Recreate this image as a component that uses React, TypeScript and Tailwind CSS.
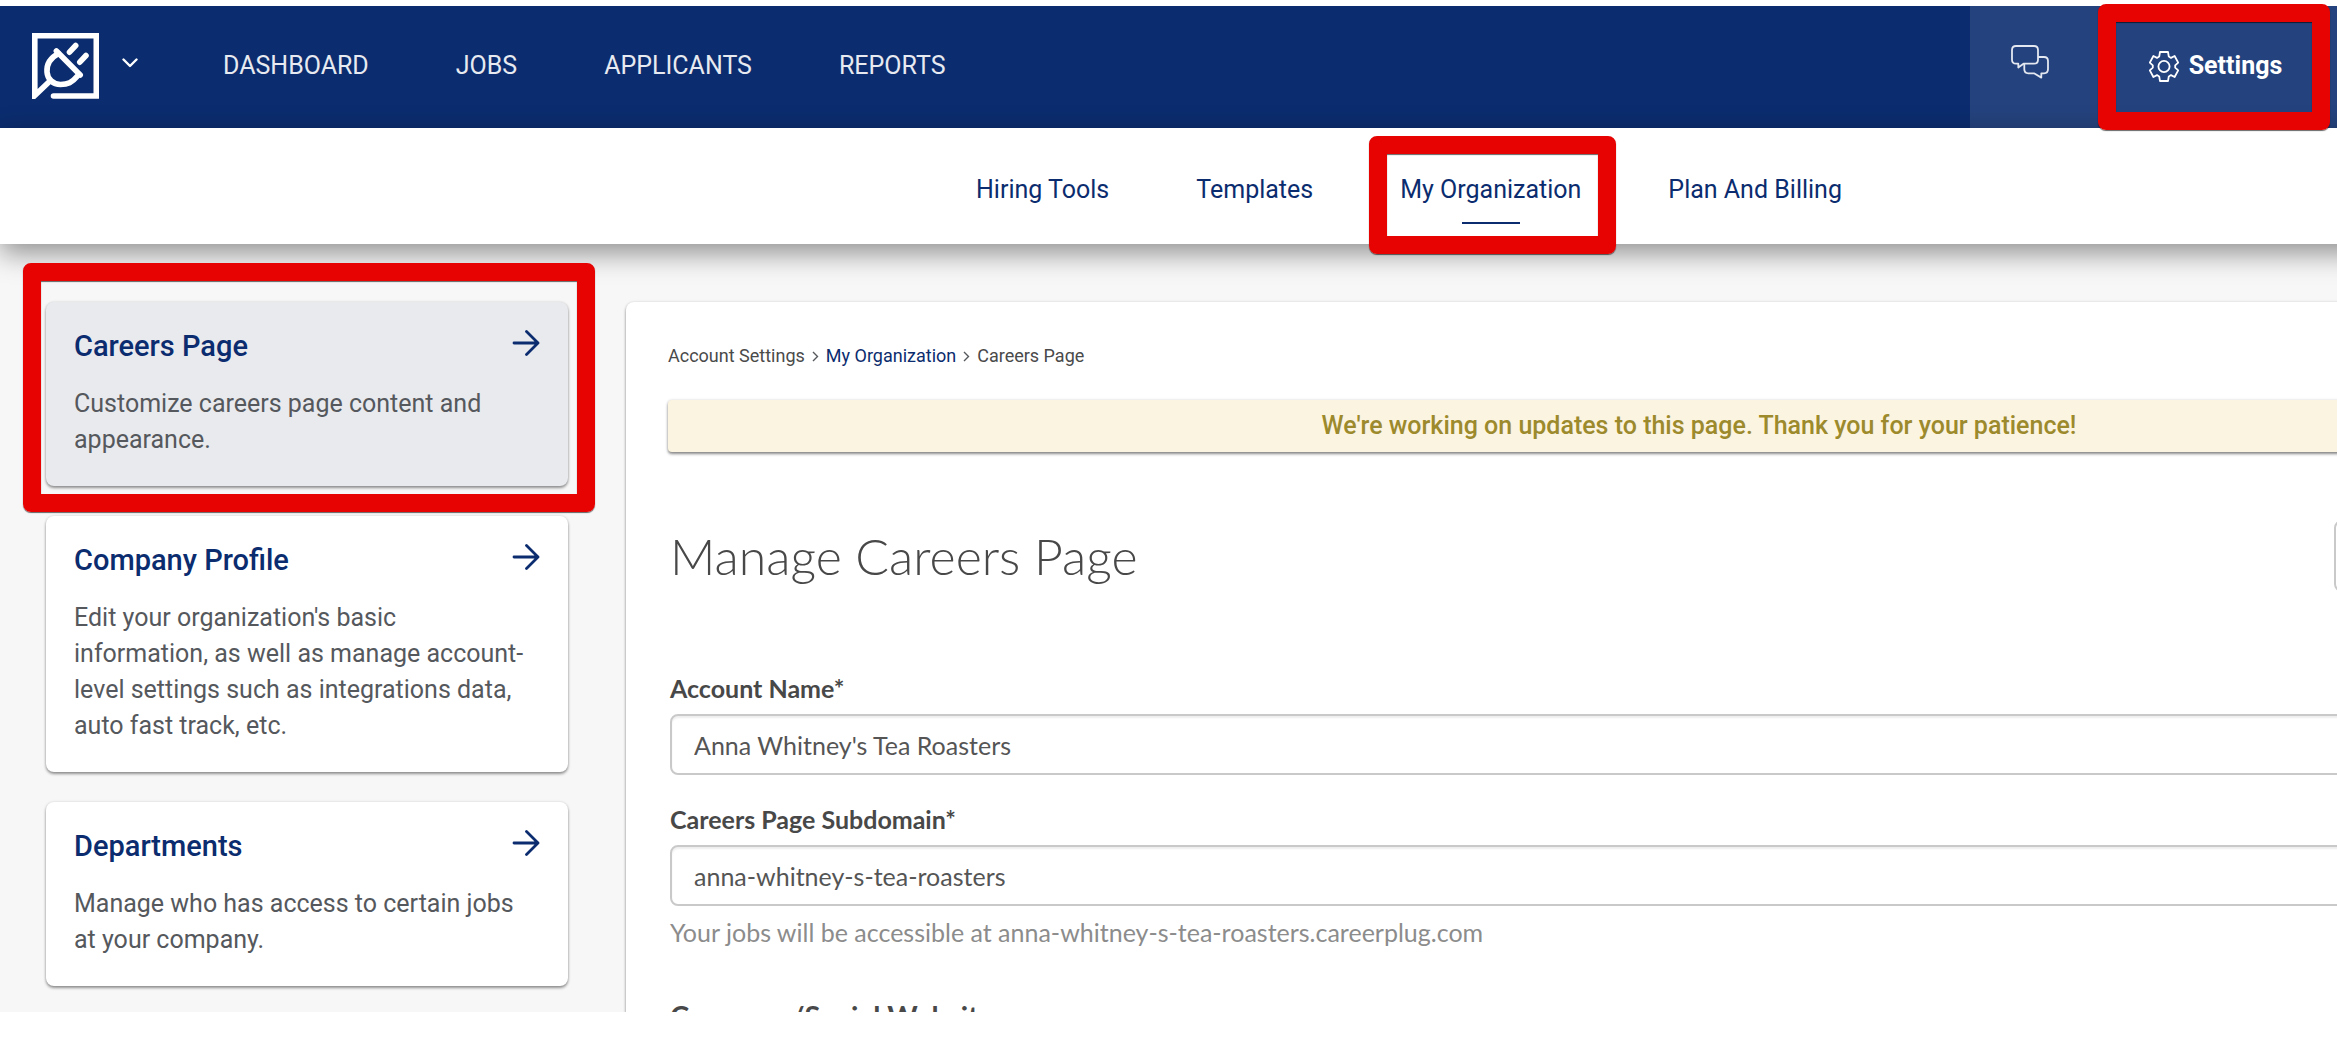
import { clsx } from "clsx";

interface SettingsCard {
  title: string;
  description: string;
  active?: boolean;
}

const mainLinks = ["DASHBOARD", "JOBS", "APPLICANTS", "REPORTS"];

const subLinks = ["Hiring Tools", "Templates", "My Organization", "Plan And Billing"];

const cards: SettingsCard[] = [
  {
    title: "Careers Page",
    description: "Customize careers page content and appearance.",
    active: true,
  },
  {
    title: "Company Profile",
    description:
      "Edit your organization's basic information, as well as manage account-level settings such as integrations data, auto fast track, etc.",
  },
  {
    title: "Departments",
    description: "Manage who has access to certain jobs at your company.",
  },
];

function Highlight({ className }: { className: string }) {
  return (
    <span
      aria-hidden="true"
      className={clsx(
        "pointer-events-none absolute z-20 rounded-lg border-[18px] border-[#e60302]",
        "shadow-[0_1px_1px_rgba(0,0,0,0.6),inset_0_1px_1px_rgba(0,0,0,0.6)]",
        className
      )}
    />
  );
}

function Logo() {
  return (
    <svg width="67" height="66" viewBox="0 0 67 66" fill="none" stroke="white" strokeWidth="5.6" strokeLinecap="round">
      <path d="M21.5 63H64.3V2.8H2.8V62.5L18 48" />
      <path d="M24.4 18L48.2 42" />
      <path d="M26.5 20.5C18 25 14.5 32 15 39C15.5 46 21 51.5 28.5 51.5C36 51.5 40 49.5 45 43.5" />
      <path d="M43.7 12.5L37.5 19.2M54 22.5L47.8 29.2" />
    </svg>
  );
}

function ChatIcon() {
  return (
    <svg width="38" height="34" viewBox="0 0 38 34" fill="none" stroke="#e4e8f0" strokeWidth="1.8" strokeLinejoin="round">
      <path d="M5 1H23Q27 1 27 5V14.7Q27 18.7 23 18.7H12.5L7.3 22.5V18.7H5Q1 18.7 1 14.7V5Q1 1 5 1Z" />
      <path d="M27 12H33Q37 12 37 16V24.3Q37 28.3 33 28.3H30.3V32.6L23 28.3H17.3Q13.3 28.3 13.3 24.3V18.7" />
    </svg>
  );
}

function GearIcon() {
  return (
    <svg width="30" height="31" viewBox="0 0 30 31" fill="none" stroke="white" strokeWidth="1.8" strokeLinejoin="round">
      <path d="M11 1H19L19.8 5.6L22 6.9L25.6 5L29.2 11.6L26.2 14.3V16.7L29.2 19.4L25.6 26L22 24.1L19.8 25.4L19 30H11L10.2 25.4L8 24.1L4.4 26L0.8 19.4L3.8 16.7V14.3L0.8 11.6L4.4 5L8 6.9L10.2 5.6Z" />
      <circle cx="15" cy="15.5" r="5.6" />
    </svg>
  );
}

function Header() {
  return (
    <header className="flex h-[122px] shrink-0 bg-[#0b2c6e]">
      <div className="flex flex-1 items-center pb-0.5 pl-8">
        <button aria-label="Switch account" className="flex items-center gap-[23px]">
          <Logo />
          <svg width="16" height="10" viewBox="0 0 16 10" fill="none" stroke="white" strokeWidth="2.4" strokeLinecap="round" strokeLinejoin="round" className="-mt-1.5">
            <path d="M1.5 1.5L8 8L14.5 1.5" />
          </svg>
        </button>
        <nav className="ml-[85px] flex gap-[87px] text-[25px] text-[#e7eaf0]">
          {mainLinks.map((link) => (
            <a key={link} href="#">
              {link}
            </a>
          ))}
        </nav>
      </div>
      <div className="flex bg-[#24427d] text-white">
        <button aria-label="Messages" className="flex w-[120px] items-center justify-center pb-2.5">
          <ChatIcon />
        </button>
        <a href="#" className="relative flex w-[247px] items-center justify-center gap-2.5 pb-0.5 pl-1 text-[25px] font-bold">
          <GearIcon />
          Settings
          <Highlight className="-top-0.5 right-[7px] -bottom-0.5 left-2" />
        </a>
      </div>
    </header>
  );
}

function SubNav() {
  return (
    <div className="relative z-10 -mr-[481px] shrink-0 bg-white shadow-[0_9px_26px_rgba(0,0,0,0.42)]">
      <nav className="flex justify-center gap-[87px] text-[25px] leading-9 text-[#0b2c6e]">
        {subLinks.map((link) => {
          const active = link === "My Organization";
          return (
            <a key={link} href="#" className="relative flex flex-col items-center pt-11 pb-5">
              {link}
              <span className={clsx("mt-3.5 h-0.5 w-[58px]", active && "bg-[#0b2c6e]")} />
              {active && <Highlight className="top-2 -right-[35px] -bottom-2.5 -left-[31px]" />}
            </a>
          );
        })}
      </nav>
    </div>
  );
}

function CardLink({ card }: { card: SettingsCard }) {
  return (
    <a
      href="#"
      className={clsx(
        "relative block rounded-lg p-7 shadow-[0_2px_3px_rgba(0,0,0,0.4),0_0_3px_rgba(0,0,0,0.12)]",
        card.active ? "bg-[#e9eaee]" : "bg-white"
      )}
    >
      <div className="flex items-start justify-between">
        <h2 className="text-[29px] leading-8 font-medium text-[#0b2c6e]">{card.title}</h2>
        <svg width="28" height="26" viewBox="0 0 28 26" fill="none" stroke="#0b2c6e" strokeWidth="2.8" strokeLinecap="round" strokeLinejoin="round">
          <path d="M2 13H26M14.5 1.5L26 13L14.5 24.5" />
        </svg>
      </div>
      <p className="mt-6 pr-2 text-[25px] leading-9 text-[#55585c]">{card.description}</p>
      {card.active && <Highlight className="-top-[39px] -right-[27px] -bottom-[26px] -left-[23px]" />}
    </a>
  );
}

function Chevron() {
  return (
    <svg width="7" height="11" viewBox="0 0 7 11" fill="none" stroke="#55585c" strokeWidth="1.4">
      <path d="M1 1L5.5 5.5L1 10" />
    </svg>
  );
}

function Field({ id, label, value }: { id: string; label: string; value: string }) {
  return (
    <div className="flex flex-col gap-2.5">
      <label htmlFor={id} className="leading-8 font-bold">
        {label}
      </label>
      <input
        id={id}
        type="text"
        defaultValue={value}
        className="h-[61px] rounded-lg border-2 border-[#c9c9c9] px-[22px] text-[#555555] shadow-[inset_0_2px_2px_rgba(0,0,0,0.07)]"
      />
    </div>
  );
}

export default function App() {
  return (
    <div className="flex h-screen flex-col overflow-hidden bg-white pt-1.5 pb-[27px] font-['Roboto',sans-serif]">
      <Header />
      <SubNav />
      <div className="min-h-0 flex-1 overflow-hidden bg-[#f7f7f7]">
        <div className="-mr-[481px] flex gap-[58px] px-[46px] pt-[58px]">
          <aside className="flex w-[522px] shrink-0 flex-col gap-[30px]">
            {cards.map((card) => (
              <CardLink key={card.title} card={card} />
            ))}
          </aside>

          <main className="flex-1 rounded-lg bg-white px-[42px] pt-10 pb-20 shadow-[0_2px_3px_rgba(0,0,0,0.4),0_0_3px_rgba(0,0,0,0.12)]">
            <nav aria-label="Breadcrumb" className="flex items-center gap-[7px] text-lg leading-7 text-[#4a4a4a]">
              <span>Account Settings</span>
              <Chevron />
              <a href="#" className="text-[#0b2c6e]">
                My Organization
              </a>
              <Chevron />
              <span>Careers Page</span>
            </nav>

            <p className="mt-[30px] rounded-sm bg-[#fbf4e1] text-center text-[25px] leading-[52px] font-medium text-[#9c8a2c] shadow-[0_2px_3px_rgba(0,0,0,0.45),0_0_3px_rgba(0,0,0,0.12)]">
              We're working on updates to this page. Thank you for your patience!
            </p>

            <div className="px-0.5 font-['Lato',sans-serif] text-[25px] text-[#484848]">
              <div className="mt-[68px] flex items-start justify-between">
                <h1 className="mt-1 h-[60px] overflow-hidden text-[50px] leading-[64px] font-light">Manage Careers Page</h1>
                <button aria-label="Page actions" className="h-[72px] w-[394px] rounded-lg border-2 border-[#c9c9c9]" />
              </div>

              <form className="mt-20 flex flex-col gap-7">
                <Field id="account-name" label="Account Name*" value="Anna Whitney's Tea Roasters" />
                <Field id="subdomain" label="Careers Page Subdomain*" value="anna-whitney-s-tea-roasters" />
              </form>
              <p className="mt-2.5 leading-8 text-[#8c8c8c]">
                Your jobs will be accessible at anna-whitney-s-tea-roasters.careerplug.com
              </p>
              <h3 className="mt-[50px] text-[29px] leading-9 font-bold">Company/Social Websites</h3>
            </div>
          </main>
        </div>
      </div>
    </div>
  );
}
